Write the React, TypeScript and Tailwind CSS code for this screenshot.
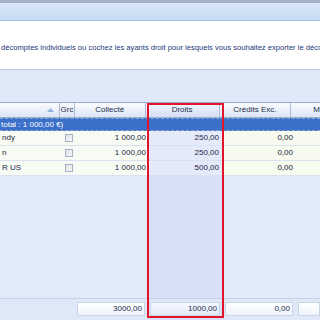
const font = { fontFamily: '"Liberation Sans", Arial, sans-serif' };

const cols = [
  { w: 'w-[61px]' },
  { w: 'w-[15px]' },
  { w: 'w-[72px]' },
  { w: 'w-[75px]' },
  { w: 'w-[73px]' },
  { w: 'flex-1' },
];

const rows = [
  { name: 'ndy', collecte: '1 000,00', droits: '250,00', credits: '0,00' },
  { name: 'n', collecte: '1 000,00', droits: '250,00', credits: '0,00' },
  { name: 'R US', collecte: '1 000,00', droits: '500,00', credits: '0,00' },
];

function Check() {
  return (
    <div className="w-[8px] h-[8px] border border-[#a7b2c2] bg-gradient-to-br from-[#dfe3e8] to-[#f7f8fa]" />
  );
}

export default function App() {
  return (
    <div className="relative w-[320px] h-[320px] overflow-hidden bg-[#e1eaf8] text-[8px] leading-none flex flex-col" style={font}>
      {/* title bar */}
      <div className="h-[3px] bg-[#a4b1c8] shrink-0" />
      <div className="h-[18px] bg-gradient-to-b from-[#dce8f8] to-[#c6d9f3] border-b border-[#a8c2e6] shrink-0" />

      {/* info panel */}
      <div className="h-[49px] bg-white border-b border-[#b4c8e6] flex items-center shrink-0 overflow-hidden">
        <span className="whitespace-nowrap text-[7.6px] text-[#22387a] pl-[1px] pt-[6px]">
          décomptes individuels ou cochez les ayants droit pour lesquels vous souhaitez exporter le déco
        </span>
      </div>

      <div className="h-[32px] bg-[#dfe9f8] shrink-0" />

      {/* grid */}
      <div className="flex-1 flex flex-col">
        {/* header */}
        <div className="h-[16px] flex border-t border-b border-[#97aed0] bg-gradient-to-b from-[#fbfcfe] to-[#dbe5f5] text-[#1d2c4c] shrink-0">
          <div className={`${cols[0].w} border-r border-[#a9bcd8] flex items-center justify-end pr-[5px]`}>
            <svg width="7" height="4" viewBox="0 0 7 4"><path d="M0 4 L3.5 0 L7 4 Z" fill="#8fb0e0" /></svg>
          </div>
          <div className={`${cols[1].w} border-r border-[#a9bcd8] flex items-center justify-center`}>Grc</div>
          <div className={`${cols[2].w} border-r border-[#a9bcd8] flex items-center justify-center`}>Collecté</div>
          <div className={`${cols[3].w} border-r border-[#a9bcd8] flex items-center justify-center bg-gradient-to-b from-[#f3f6fd] to-[#d4def5]`}>Droits</div>
          <div className={`${cols[4].w} border-r border-[#a9bcd8] flex items-center justify-center`}>Crédits Exc.</div>
          <div className="flex-1 flex items-center pl-[22px]">M</div>
        </div>

        {/* group row */}
        <div className="h-[13px] bg-[#3b6fc9] border-t border-b border-dashed border-[#8aa6d8] text-white flex items-center shrink-0">
          <span className="pl-[1px]">total : 1 000,00 €)</span>
        </div>

        {/* data rows */}
        {rows.map((r, i) => (
          <div key={i} className="h-[15px] flex border-b border-[#d9e2ee] text-[#1d2540] shrink-0">
            <div className={`${cols[0].w} bg-[#f8fbf4] flex items-center pl-[2px]`}>{r.name}</div>
            <div className={`${cols[1].w} bg-[#f8fbf4] flex items-center justify-center`}><Check /></div>
            <div className={`${cols[2].w} bg-[#f8fbf4] flex items-center justify-end pr-[2px]`}>{r.collecte}</div>
            <div className={`${cols[3].w} bg-[#e4eaf9] flex items-center justify-end pr-[4px]`}>{r.droits}</div>
            <div className={`${cols[4].w} bg-[#f6faef] flex items-center justify-end pr-[3px]`}>{r.credits}</div>
            <div className="flex-1 bg-[#f6faef]" />
          </div>
        ))}

        {/* empty area */}
        <div className="flex-1 flex">
          <div className="w-[148px]" />
          <div className="w-[75px] bg-[#d7e0f6]" />
          <div className="flex-1" />
        </div>

        {/* footer */}
        <div className="h-[22px] flex border-t border-[#c3d3ea] bg-[#dfe8f6] pt-[3px] text-[#1d2c4c] shrink-0">
          <div className="w-[76px]" />
          <div className="w-[72px] pr-[3px] pl-[1px]">
            <div className="h-[14px] border border-[#c9d6e8] bg-gradient-to-b from-white to-[#eef3fb] flex items-center justify-end pr-[2px]">3000,00</div>
          </div>
          <div className="w-[75px] pr-[3px] pl-[2px] bg-[#d7e0f6]">
            <div className="h-[14px] border border-[#c9d6e8] bg-gradient-to-b from-[#f4f7fd] to-[#e3eaf8] flex items-center justify-end pr-[2px]">1000,00</div>
          </div>
          <div className="w-[73px] pr-[3px] pl-[2px]">
            <div className="h-[14px] border border-[#c9d6e8] bg-gradient-to-b from-white to-[#eef3fb] flex items-center justify-end pr-[2px]">0,00</div>
          </div>
          <div className="flex-1 pl-[2px]">
            <div className="h-[14px] border border-[#c9d6e8] bg-gradient-to-b from-white to-[#eef3fb]" />
          </div>
        </div>
      </div>

      {/* highlight rectangle */}
      <div className="absolute left-[147px] top-[103px] w-[77px] h-[215px] border-2 border-[#e3132c] pointer-events-none" />
    </div>
  );
}
